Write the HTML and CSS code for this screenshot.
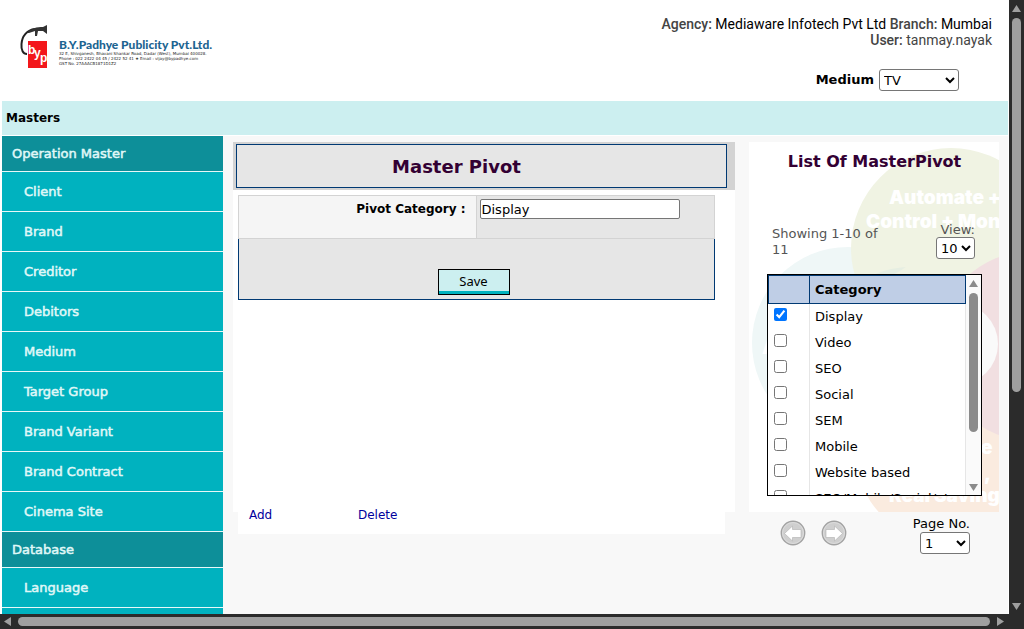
FILE: index.html
```html
<!DOCTYPE html>
<html lang="en">
<head>
<meta charset="utf-8">
<title>Master Pivot</title>
<link rel="stylesheet" href="styles.css">
</head>
<body>
<div class="frame">
  <div class="page">
    <header class="header">
      <svg class="logo" viewBox="0 0 200 56" role="img" aria-label="B.Y.Padhye Publicity Pvt.Ltd.">
        <path d="M8 33 C4 33 2 29 2.500 23 C3 15 8 9 16 8" fill="none" stroke="#222" stroke-width="2"/>
        <path d="M8 12 C12 7 18 6 24 6 L28 4 V13 L24 10 L19 10 L18 15 L16 15 L16 10 L10 12Z" fill="#333"/>
        <rect x="9" y="20" width="19" height="27" fill="#f3171b"/>
        <g class="logo-mark"><text x="9" y="33">b</text><text x="15" y="36">y</text><text x="21" y="41">p</text></g>
        <text class="logo-name" x="40" y="28">B.Y.Padhye Publicity Pvt.Ltd.</text>
        <g class="logo-small">
          <text x="40" y="34">32 E, Shivganesh, Bhavani Shankar Road, Dadar (West), Mumbai 400028.</text>
          <text x="40" y="39">Phone : 022 2422 04 45 / 2422 52 41 ★ Email : vijay@bypadhye.com</text>
          <text x="40" y="44">GST No. 27AAACB1871D1Z2</text>
        </g>
      </svg>
      <div class="account">
        <p class="account-line"><b>Agency:</b> <span class="dark">Mediaware Infotech Pvt Ltd</span> <b>Branch:</b> <span class="dark">Mumbai</span></p>
        <p class="account-line"><b>User:</b> tanmay.nayak</p>
        <div class="medium">
          <label for="medium">Medium</label>
          <select id="medium" class="select select-medium"><option>TV</option></select>
        </div>
      </div>
    </header>
    <div class="band">Masters</div>
    <div class="body">
      <nav class="sidebar">
        <a class="group" href="#">Operation Master</a>
        <a class="item" href="#">Client</a>
        <a class="item" href="#">Brand</a>
        <a class="item" href="#">Creditor</a>
        <a class="item" href="#">Debitors</a>
        <a class="item" href="#">Medium</a>
        <a class="item" href="#">Target Group</a>
        <a class="item" href="#">Brand Variant</a>
        <a class="item" href="#">Brand Contract</a>
        <a class="item" href="#">Cinema Site</a>
        <a class="group" href="#">Database</a>
        <a class="item" href="#">Language</a>
        <a class="item" href="#"></a>
      </nav>
      <main class="main">
        <div class="sheet">
          <div class="title-bar"><h1 class="title">Master Pivot</h1></div>
          <form class="form">
            <div class="row">
              <label class="row-label" for="category">Pivot Category :</label>
              <div class="row-field"><input id="category" class="input" type="text" value="Display"></div>
            </div>
            <div class="actions"><button class="save" type="button">Save</button></div>
          </form>
        </div>
        <div class="links"><a class="link" href="#">Add</a><a class="link" href="#">Delete</a></div>
      </main>
      <aside class="aside">
        <section class="list">
          <svg class="bubbles" viewBox="0 0 250 370" aria-hidden="true">
            <circle cx="99" cy="201" r="96" fill="#eff7f7"/>
            <circle cx="202" cy="106" r="100" fill="#f0f3e3"/>
            <path d="M107 143A96 96 0 0 1 157 125A100 100 0 0 1 107 143Z" fill="#e6eee2"/>
            <circle cx="199" cy="308" r="93" fill="#faebdf"/>
            <circle cx="283" cy="204" r="95" fill="#f1dfe1"/>
            <circle cx="208" cy="202" r="41" fill="#fafafa"/>
            <g class="bubble-text">
              <text x="140" y="62">Automate +</text>
              <text x="117" y="86">Control + Mon</text>
              <text x="13" y="212">A</text>
              <text x="232" y="312">e</text>
              <text x="235" y="338">,</text>
              <text x="140" y="360">Real Saving</text>
            </g>
          </svg>
          <h2 class="list-title">List Of MasterPivot</h2>
          <div class="list-info">
            <p class="showing">Showing 1-10 of 11</p>
            <div class="view"><label for="view">View:</label><select id="view" class="select select-view"><option>10</option></select></div>
          </div>
          <div class="scroller">
            <table class="table">
              <thead><tr><th class="check-col" aria-label="Select"></th><th>Category</th></tr></thead>
              <tbody>
                <tr><td><input class="check" type="checkbox" id="c1" checked></td><td><label for="c1">Display</label></td></tr>
                <tr><td><input class="check" type="checkbox" id="c2"></td><td><label for="c2">Video</label></td></tr>
                <tr><td><input class="check" type="checkbox" id="c3"></td><td><label for="c3">SEO</label></td></tr>
                <tr><td><input class="check" type="checkbox" id="c4"></td><td><label for="c4">Social</label></td></tr>
                <tr><td><input class="check" type="checkbox" id="c5"></td><td><label for="c5">SEM</label></td></tr>
                <tr><td><input class="check" type="checkbox" id="c6"></td><td><label for="c6">Mobile</label></td></tr>
                <tr><td><input class="check" type="checkbox" id="c7"></td><td><label for="c7">Website based</label></td></tr>
                <tr><td><input class="check" type="checkbox" id="c8"></td><td><label for="c8">SEO/Mobile/Social/etc</label></td></tr>
              </tbody>
            </table>
            <div class="bar bar-light">
              <svg class="arrow" viewBox="0 0 15 15"><path d="M3 12 L7.500 5 L12 12Z"/></svg>
              <div class="track"><div class="thumb thumb-list"></div></div>
              <svg class="arrow" viewBox="0 0 15 15"><path d="M3 4 L7.500 11 L12 4Z"/></svg>
            </div>
          </div>
        </section>
        <div class="pager">
          <button class="round" type="button" aria-label="Previous page"><svg viewBox="0 0 26 26"><circle cx="13" cy="13" r="11.700" fill="#cfcfcf" stroke="#a3a3a3" stroke-width="1.400"/><circle cx="13" cy="13" r="10.500" fill="none" stroke="#dcdcdc"/><path d="M4.500 13.500 L12.500 6 V9.500 H21 V17.500 H12.500 V21Z" fill="#fff" stroke="#b0b0b0" stroke-width=".6"/></svg></button>
          <button class="round" type="button" aria-label="Next page"><svg viewBox="0 0 26 26"><circle cx="13" cy="13" r="11.700" fill="#cfcfcf" stroke="#a3a3a3" stroke-width="1.400"/><circle cx="13" cy="13" r="10.500" fill="none" stroke="#dcdcdc"/><path d="M21.500 13.500 L13.500 6 V9.500 H5 V17.500 H13.500 V21Z" fill="#fff" stroke="#b0b0b0" stroke-width=".6"/></svg></button>
          <div class="page-no"><label for="pageno">Page No.</label><select id="pageno" class="select select-page"><option>1</option></select></div>
        </div>
      </aside>
    </div>
  </div>
  <div class="bar bar-dark">
    <svg class="arrow" viewBox="0 0 15 15"><path d="M3 12 L7.500 5 L12 12Z"/></svg>
    <div class="track"><div class="thumb thumb-page"></div></div>
    <svg class="arrow" viewBox="0 0 15 15"><path d="M3 4 L7.500 11 L12 4Z"/></svg>
  </div>
  <div class="bar bar-dark bar-across">
    <svg class="arrow" viewBox="0 0 15 15"><path d="M11 3 L4 7.500 L11 12Z"/></svg>
    <div class="track"><div class="thumb thumb-across"></div></div>
    <svg class="arrow" viewBox="0 0 15 15"><path d="M4 3 L11 7.500 L4 12Z"/></svg>
  </div>
</div>
</body>
</html>
```

FILE: styles.css
```css
* { box-sizing: border-box; }
body, p, h1, h2 { margin: 0; }
body { font: 13px/16px "DejaVu Sans", Verdana, sans-serif; color: #000; background: #fff; }
a { text-decoration: none; }

.frame { display: grid; grid-template-columns: minmax(0, 1fr) 15px; grid-template-rows: minmax(0, 1fr) 15px; height: 100vh; }
.page { display: flex; flex-direction: column; overflow: hidden; padding: 0 1px 0 2px; }

.header { display: flex; justify-content: space-between; flex: none; height: 101px; padding: 16px 16px 0 17px; }
.logo { width: 200px; height: 56px; margin-top: 5px; }
.logo-mark { font: 700 12px "Liberation Sans", sans-serif; fill: #fff; }
.logo-name { font: 900 12px Lato, sans-serif; fill: #1c6491; }
.logo-small { font: 4px "DejaVu Sans", sans-serif; fill: #222; }
.account { text-align: right; font-family: Roboto, sans-serif; font-size: 14px; color: #444; }
.account-line b { font-weight: 500; }
.dark { color: #000; }
.medium { display: flex; align-items: center; justify-content: flex-end; gap: 5px; margin-top: 21px; padding-right: 33px; font: 700 13px/16px "DejaVu Sans", sans-serif; color: #000; }
.select { height: 22px; padding: 0; border: 1px solid #767676; border-radius: 3px; background: #fff; color: #000; font: 13px "DejaVu Sans", sans-serif; }
.select-medium { width: 80px; }

.band { flex: none; height: 35px; padding: 9px 4px; border-bottom: 1px solid #fff; background: #cceff0; font-weight: 700; font-size: 12px; }
.body { display: flex; align-items: flex-start; flex: 1; min-height: 0; background: #f8f8f8; }

.sidebar { flex: none; width: 221px; font-size: 13px; -webkit-text-stroke: 0.5px #e0f8f8; }
.sidebar a { display: block; border-bottom: 1px solid #e8f8f8; color: #e0f8f8; }
.sidebar .group { height: 36px; padding: 10px 10px 9px; background: #0d8f99; }
.sidebar .item { height: 40px; padding: 12px 22px 11px; background: #00b2bf; }

.main { flex: 1; min-width: 0; margin: 6px 14px 0 10px; }
.sheet { min-height: 370px; background: #fff; }
.title-bar { padding: 2px 8px 2px 3px; background: #d3d3d3; }
.title { padding: 11px 50px 9px 0; border: 1px solid #003973; background: #e6e6e6; color: #330033; font-size: 18px; line-height: 22px; text-align: center; }
.form { margin: 5px 20px 0 5px; }
.row { display: grid; grid-template-columns: 1fr 1fr; height: 44px; border: 1px solid #d3d3d3; background: #e6e6e6; }
.row-label { padding: 5px 10px; border-right: 1px solid #d3d3d3; background: #f5f5f5; font-size: 12px; font-weight: 700; text-align: right; }
.row-field { padding: 3px; }
.input { width: 200px; height: 20px; padding: 1px; border: 1px solid #767676; border-radius: 2px; background: #fff; font: 13px "DejaVu Sans", sans-serif; }
.actions { padding: 30px 6px 4px 0; border: 1px solid #003973; border-top: 0; background: #e6e6e6; text-align: center; }
.save { display: inline-block; width: 72px; height: 26px; padding: 0 0 2px; border: 1px solid #000; background: #cceff0; box-shadow: inset 0 -3px #00b2bf; font: 13px "Noto Sans", sans-serif; vertical-align: top; }
.links { display: grid; grid-template-columns: 109px 1fr; height: 22px; margin: 0 10px 0 5px; padding: 0 11px; background: #fff; }
.link { color: #00009c; font-size: 12px; line-height: 6px; }

.aside { flex: none; width: 250px; margin: 6px 9px 0 0; }
.list { position: relative; height: 370px; padding: 10px 17px 0 18px; background: #fff; overflow: hidden; }
.bubbles { position: absolute; inset: 0; width: 250px; height: 370px; }
.bubble-text { font: 900 19px Inter, sans-serif; fill: #fff; }
.list-title, .list-info, .scroller { position: relative; }
.list-title { color: #330033; font-size: 16px; line-height: 20px; text-align: center; }
.list-info { display: flex; justify-content: space-between; align-items: flex-start; height: 102px; padding: 50px 7px 0 5px; color: #555; }
.showing { width: 116px; padding-top: 4px; }
.view { display: flex; flex-direction: column; align-items: flex-end; }
.view label { line-height: 15px; }
.select-view { width: 39px; }

.scroller { display: flex; height: 222px; border: 1px solid #000; background: #fff; overflow: hidden; }
.table { flex: 1; border-collapse: collapse; table-layout: fixed; align-self: flex-start; }
.table th { height: 28px; padding: 0 5px; border: 1px solid #003973; background: #bfcee6; text-align: left; }
.table .check-col { width: 41px; }
.table td { height: 26px; padding: 0 5px; border-right: 1px solid #e6e6e6; white-space: nowrap; overflow: hidden; }
.check { display: block; width: 13px; height: 13px; margin: 0 0 4px; }

.pager { display: flex; padding: 4px 29px 0 31px; }
.round { width: 26px; height: 26px; margin: 4px 15px 0 0; padding: 0; border: 0; background: none; }
.round svg { display: block; width: 26px; height: 26px; }
.page-no { display: flex; flex-direction: column; align-items: flex-end; margin-left: auto; }
.select-page { width: 50px; }

.bar { display: flex; flex-direction: column; width: 15px; }
.arrow { flex: none; width: 15px; height: 15px; }
.track { flex: 1; min-height: 0; display: flex; }
.thumb { width: 9px; margin: 3px; border-radius: 5px; }
.bar-light { flex: none; background: #fafafa; }
.bar-light .arrow { fill: #8b8b8b; }
.thumb-list { height: 73%; background: #8b8b8b; }
.bar-dark { background: #2b2b2b; }
.bar-dark .arrow { fill: #9f9f9f; }
.bar-dark .thumb { background: #9f9f9f; }
.thumb-page { height: 64%; }
.bar-across { grid-column: 1 / -1; flex-direction: row; width: auto; padding-right: 16px; }
.bar-across .thumb { width: auto; height: 9px; margin: 3px; flex: 1; }
```
